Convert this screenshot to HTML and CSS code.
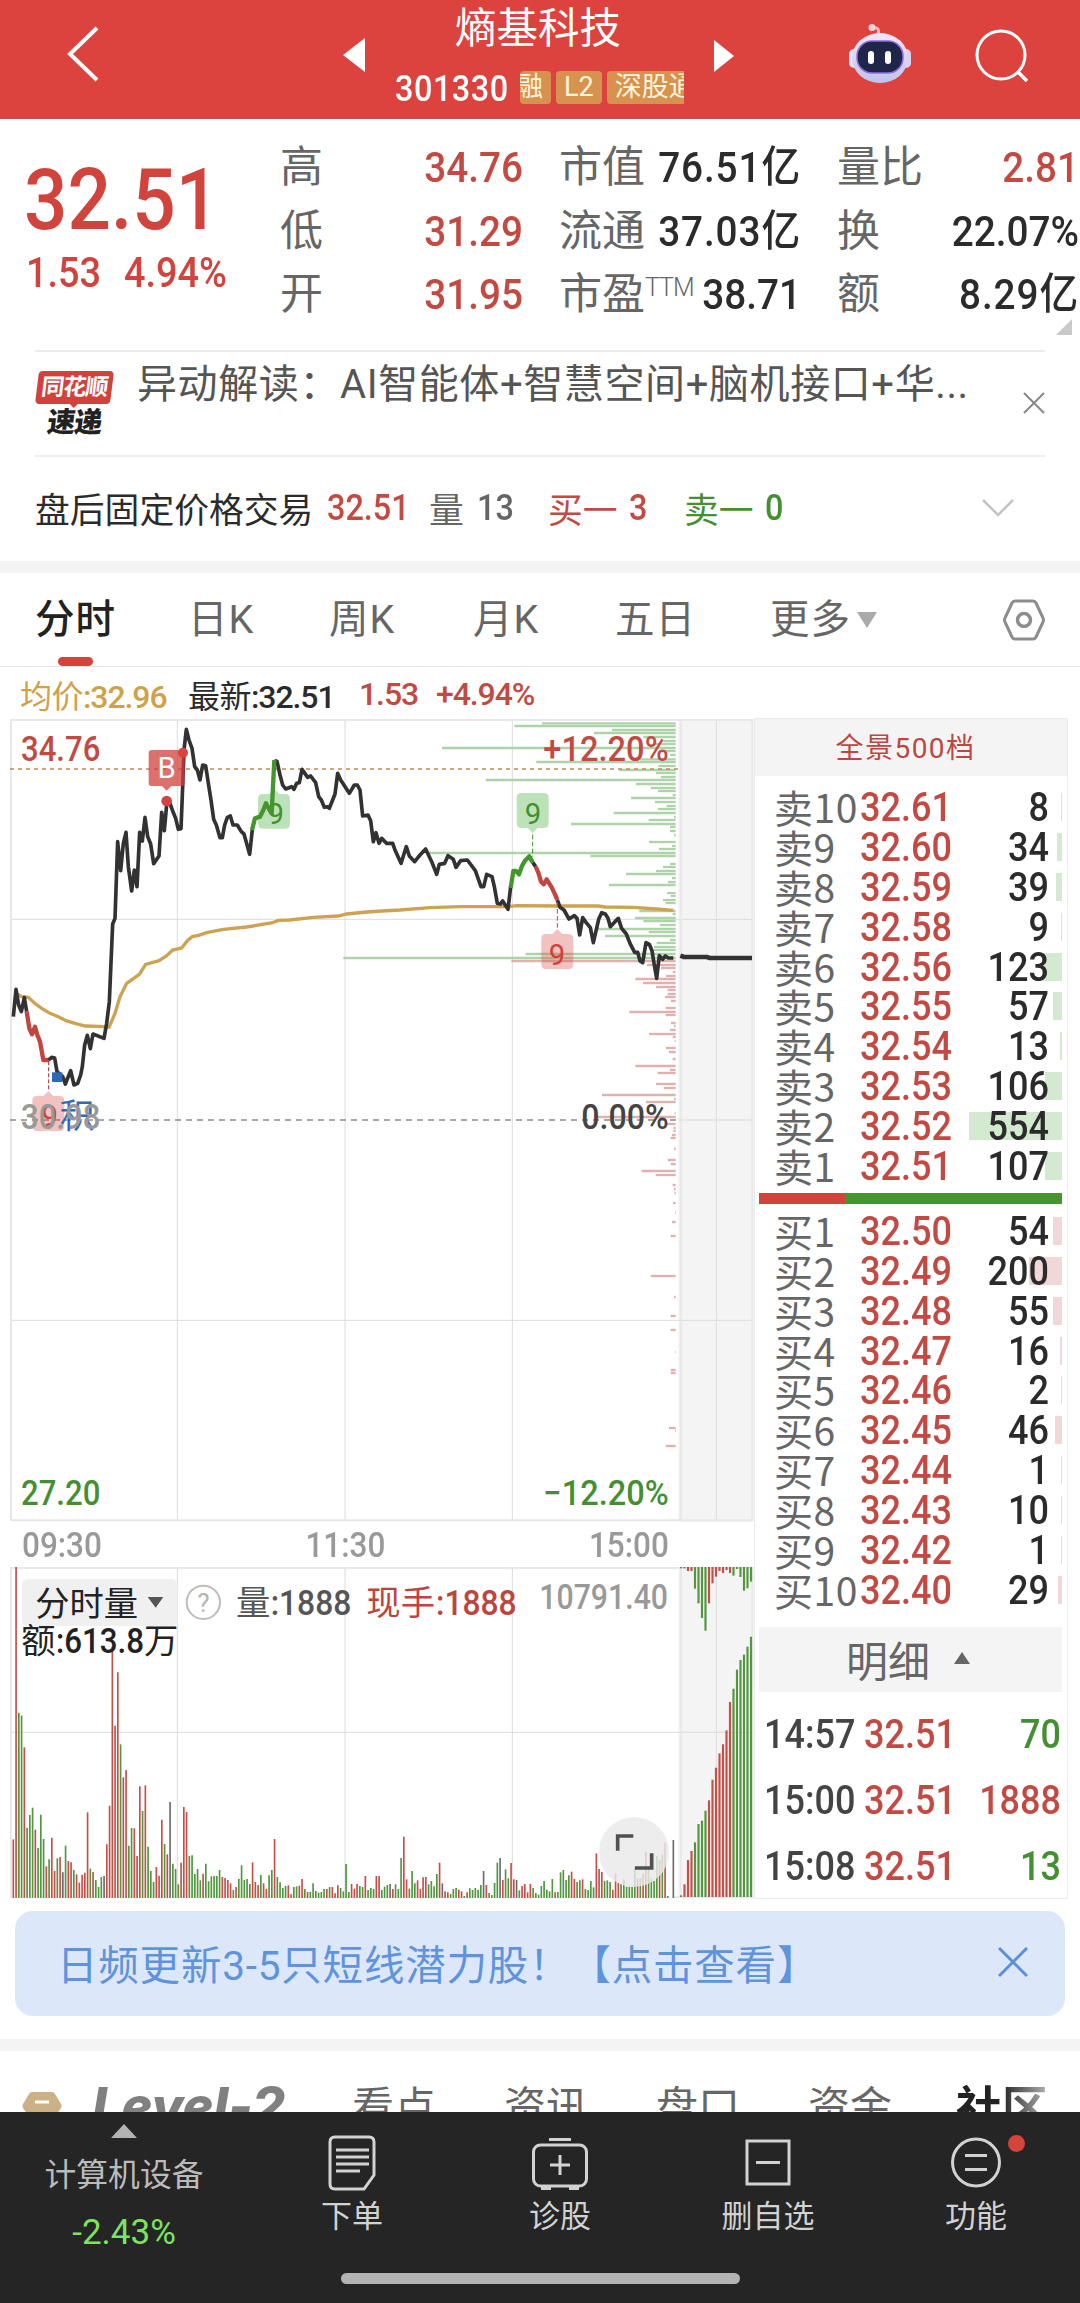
FILE: index.html
```
<!DOCTYPE html>
<html lang="zh-CN">
<head>
  <meta charset="UTF-8">
  <meta name="viewport" content="width=device-width, initial-scale=1.0">
  <title>熵基科技 301330</title>
  <link rel="stylesheet" href="styles.css">
</head>
<body>
  <header class="header">
    <svg class="back" width="34" height="58" viewBox="0 0 34 58"><path d="M31 3 4 29l27 26" fill="none" stroke="#fff" stroke-width="4"/></svg>
    <svg class="prev" width="22" height="34" viewBox="0 0 22 34"><path d="M22 0v34L0 17z" fill="#fff"/></svg>
    <div class="stock">
      <h1>熵基科技</h1>
      <div class="stock-code">
        <span class="code">301330</span>
        <div class="tags"><span class="tag tag-cut">融</span><span class="tag">L2</span><span class="tag">深股通</span></div>
      </div>
    </div>
    <svg class="next" width="20" height="32" viewBox="0 0 20 32"><path d="M0 0v32l20-16z" fill="#fff"/></svg>
    <svg class="robot" width="64" height="60" viewBox="0 0 64 60">
      <defs><linearGradient id="rb" x1="0" y1="0" x2="0" y2="1"><stop offset="0" stop-color="#f6e6f6"/><stop offset="1" stop-color="#bfc3ea"/></linearGradient></defs>
      <path d="M30 10c2-5-1-7-6-6" fill="none" stroke="#f3b8c0" stroke-width="3"/><circle cx="24" cy="3.500" r="3.500" fill="#fbd3d6"/>
      <rect x="1" y="25" width="10" height="19" rx="5" fill="#eee4f6"/><rect x="53" y="25" width="10" height="19" rx="5" fill="#d8d2f2"/>
      <ellipse cx="32" cy="34" rx="28" ry="25" fill="url(#rb)"/>
      <rect x="9" y="17" width="46" height="32" rx="15" fill="#20264a" stroke="#8a70dc" stroke-width="1.500"/>
      <rect x="20" y="27" width="6" height="13" rx="3" fill="#fff"/><rect x="37" y="27" width="6" height="13" rx="3" fill="#fff"/>
    </svg>
    <svg class="search" width="54" height="54" viewBox="0 0 54 54"><circle cx="26" cy="26" r="24" fill="none" stroke="#fff" stroke-width="3"/><path d="m43 43 9 9" stroke="#fff" stroke-width="3.500"/></svg>
  </header>

  <section class="quote">
    <div class="price-box">
      <div class="price">32.51</div>
      <div class="change"><span>1.53</span><span>4.94%</span></div>
    </div>
    <dl class="stats">
      <dt>高</dt><dd class="red">34.76</dd><dt>市值</dt><dd class="yi">76.51亿</dd><dt>量比</dt><dd class="red">2.81</dd>
      <dt>低</dt><dd class="red">31.29</dd><dt>流通</dt><dd class="yi">37.03亿</dd><dt>换</dt><dd>22.07%</dd>
      <dt>开</dt><dd class="red">31.95</dd><dt>市盈<sup>TTM</sup></dt><dd>38.71</dd><dt>额</dt><dd class="yi">8.29亿</dd>
    </dl>
    <i class="corner"></i>
  </section>

  <section class="news">
    <div class="news-logo"><b class="logo-top">同花顺</b><b class="logo-bottom">速递</b></div>
    <p class="news-text">异动解读：AI智能体+智慧空间+脑机接口+华...</p>
    <svg class="news-close" width="22" height="22" viewBox="0 0 22 22"><path d="m1 1 20 20M21 1 1 21" stroke="#888" stroke-width="2"/></svg>
  </section>

  <section class="after">
    <span class="after-title">盘后固定价格交易</span><span class="num red">32.51</span><span class="muted">量</span><span class="num muted">13</span>
    <span class="red">买一</span><span class="num red">3</span><span class="green">卖一</span><span class="num green">0</span>
    <svg width="32" height="20" viewBox="0 0 32 20"><path d="m1 2 15 15L31 2" fill="none" stroke="#c4c4c4" stroke-width="2.500"/></svg>
  </section>

  <div class="band"></div>

  <nav class="periods">
    <span class="active">分时</span><span>日K</span><span>周K</span><span>月K</span><span>五日</span><span>更多<i class="tri-down"></i></span>
    <svg width="44" height="42" viewBox="0 0 44 42"><path d="M13 2h18q2 0 3 2l7 15q1 2 0 4l-7 15q-1 2-3 2H13q-2 0-3-2L3 23q-1-2 0-4l7-15q1-2 3-2z" fill="none" stroke="#8d8d8d" stroke-width="3"/><circle cx="22" cy="21" r="6.500" fill="none" stroke="#8d8d8d" stroke-width="3.500"/></svg>
  </nav>

  <main class="board">
    <div class="charts">
      <div class="legend"><span class="gold"><i>均价</i>:32.96</span><span><i>最新</i>:32.51</span><span class="red">1.53</span><span class="red">+4.94%</span></div>

      <!-- chart units are thirds of a pixel -->
      <svg class="chart" width="754" height="803" viewBox="0 57 2262 2409">
        <rect x="2035" y="57" width="225" height="2409" fill="#f4f4f4"/>
        <g stroke="#dcdcdc" stroke-width="3">
          <path d="M532 58V2464M1035 58V2464M1537 58V2464M2149 58V2464M33 658H2260M33 1861H2260"/>
          <path d="M33 60V2464M2042 60V2464M2257 60V2464M30 60H2260M30 2461H2260" stroke="#e8e8e8" stroke-width="6"/>
        </g>
        <g id="profile"></g>
        <path d="M30 207H2034" stroke="#c08a58" stroke-width="5" stroke-dasharray="12 12"/>
        <path d="M30 1260H2034" stroke="#8a8a8a" stroke-width="5" stroke-dasharray="18 15"/>
        <path d="M2034 1260H2260" stroke="#e2e2e2" stroke-width="5"/>
        <polyline fill="none" stroke="#cda252" stroke-width="10" points="48,880 65,890 85,892 104,910 125,925 150,940 175,950 198,962 225,970 256,978 298,979 327,982 345,940 360,890 380,850 400,836 418,823 437,793 477,782 500,767 518,750 545,744 562,722 577,710 596,706 620,698 670,688 740,681 800,671 815,669 835,661 870,660 940,652 1015,648 1040,642 1100,636 1145,633 1200,630 1290,623 1380,620 1525,620 1550,617 1670,618 1795,618 1815,621 1900,622 1970,627 2020,631"/>
        <g fill="none" stroke="#323232" stroke-width="11" stroke-linejoin="round">
          <polyline points="40,950 48,868 56,915 64,935 73,893 80,935"/>
          <polyline stroke="#c3453f" stroke-width="13" points="80,935 88,985 96,1003 105,980 112,1005 120,1025 130,1080 148,1080"/>
          <polyline points="146,1080 155,1072 164,1074 171,1115 188,1130 196,1152 212,1112 222,1155 233,1150 242,1125 247,1100 254,1035 262,1006 271,1046 279,1002 312,1015 320,970 328,905 338,672 345,655 353,425 362,512 370,430 378,397 385,500 395,573 403,510 411,560 419,397 427,423 435,352 443,410 452,432 461,491 477,468 485,337 493,392 501,303 510,310 518,333 527,355 535,388 543,386 548,260 552,150 559,88 567,120 576,145 584,200 592,210 600,240 608,195 617,197 625,250 633,300 641,358 649,375 660,413 667,413 674,375 682,352 691,348 699,375 712,375 724,395 732,402 749,463 757,388"/>
          <polyline points="823,182 831,184 840,225 848,255 857,267 875,260 882,268 890,250 898,248 906,208 923,232 932,228 947,248 956,290 964,300 973,322 981,320 988,325 1005,282 1013,220 1022,240 1048,280 1063,255 1072,255 1080,270 1088,348 1104,345 1112,362 1120,425 1128,398 1137,430 1145,415 1160,430 1178,430 1185,450 1203,490 1219,440 1228,468 1244,485 1260,465 1277,447 1295,485 1310,523 1318,493 1334,490 1344,467 1360,478 1368,502 1382,482 1402,480 1426,512 1443,560 1451,560 1460,523 1476,530 1483,560 1492,610 1501,612 1508,603 1524,628 1532,560"/>
          <polyline points="1598,487 1607,500"/>
          <polyline points="1672,600 1680,622 1692,630 1707,657 1723,647 1731,655 1739,705 1748,653 1758,667 1771,683 1780,728 1796,658 1805,638 1816,642 1824,655 1831,680 1845,665 1855,655 1865,685 1879,702 1890,730 1904,757 1913,757 1920,783 1928,788 1938,728 1948,733 1956,752 1962,790 1970,835 1978,767 1988,778 1996,768 2005,774 2020,774"/>
          <polyline stroke-width="14" points="2041,767 2052,771 2120,771 2130,774 2256,774"/>
        </g>
        <!-- markers -->
        <g class="mark">
          <path d="M456 150h88q10 0 10 10v88q0 10-10 10h-30l-14 14-14-14h-30q-10 0-10-10v-88q0-10 10-10z" fill="#d0403c" opacity=".75"/>
          <text x="500" y="233" fill="#fff">B</text>
          <circle cx="549" cy="158" r="15" fill="#d8453f"/><circle cx="500" cy="303" r="16" fill="#cf4541"/>
          <path d="M788 282h20l15-15 15 15h18q14 0 14 14v76q0 14-14 14h-68q-14 0-14-14v-76q0-14 14-14z" fill="#4caf43" opacity=".37"/>
          <text x="827" y="373" fill="#3f922d">9</text>
          <path d="M1564 279h68q14 0 14 14v77q0 14-14 14h-19l-15 15-15-15h-19q-14 0-14-14v-77q0-14 14-14z" fill="#4caf43" opacity=".37"/>
          <text x="1599" y="372" fill="#3f922d">9</text>
          <path d="M1598 404v66" stroke="#3f922d" stroke-width="3" stroke-dasharray="14 7"/>
          <path d="M1638 702h19l15-15 15 15h19q14 0 14 14v77q0 14-14 14h-68q-14 0-14-14v-77q0-14 14-14z" fill="#d8453f" opacity=".33"/>
          <text x="1671" y="795" fill="#d13e3a">9</text>
          <path d="M1672 606v78" stroke="#c3453f" stroke-width="3" stroke-dasharray="14 7"/>
          <path d="M111 1188h19l15-15 15 15h19q14 0 14 14v77q0 14-14 14h-68q-14 0-14-14v-77q0-14 14-14z" fill="#d8453f" opacity=".33"/>
          <text x="149" y="1277" fill="#d13e3a">9</text>
          <path d="M146 1084v88" stroke="#9c3030" stroke-width="3" stroke-dasharray="12 6"/>
          <rect x="156" y="1117" width="31" height="29" fill="#2e68b8"/>
          <text class="ji" x="231" y="1284" fill="#2f69b7">积</text>
        </g>
        <g fill="none" stroke="#43952c" stroke-width="13" stroke-linejoin="round">
          <polyline points="756,390 765,355 780,350 790,330 798,310 806,325 815,340 823,180"/>
          <polyline points="1532,564 1540,513 1548,513 1557,523 1566,498 1575,482 1588,469 1598,487"/>
          <polyline stroke="#c3453f" points="1607,500 1615,518 1623,545 1631,553 1640,538 1655,562 1665,583 1672,600"/>
        </g>
        <g class="axis">
          <text x="63" y="183" textLength="238" lengthAdjust="spacingAndGlyphs" fill="#c24a43">34.76</text>
          <text x="1630" y="183" textLength="376" lengthAdjust="spacingAndGlyphs" fill="#c24a43">+12.20%</text>
          <text x="63" y="1286" textLength="238" lengthAdjust="spacingAndGlyphs" fill="#999">30.98</text>
          <text x="1744" y="1286" textLength="262" lengthAdjust="spacingAndGlyphs" fill="#444">0.00%</text>
          <text x="63" y="2415" textLength="238" lengthAdjust="spacingAndGlyphs" fill="#448f32">27.20</text>
          <text x="1630" y="2415" textLength="376" lengthAdjust="spacingAndGlyphs" fill="#448f32">−12.20%</text>
        </g>
      </svg>

      <div class="times"><span>09:30</span><span>11:30</span><span>15:00</span></div>

      <svg class="chart" width="754" height="332" viewBox="0 321 2262 996">
        <rect x="2035" y="321" width="225" height="993" fill="#f4f4f4"/>
        <g stroke="#dcdcdc" stroke-width="3">
          <path d="M532 321V1314M1035 321V1314M1537 321V1314M2149 321V1314M33 817H2260"/>
          <path d="M33 324V1314M2042 324V1314M2257 324V1314M30 324H2260M2020 1312H2260" stroke="#e8e8e8" stroke-width="6"/>
        </g>
        <g id="volume"></g>
        <g class="vol-text">
          <rect x="66" y="357" width="466" height="141" rx="16" fill="#f0f0f0"/>
          <text class="zh" x="106" y="467" textLength="308" fill="#222">分时量</text>
          <path d="M443 411h47l-23 32z" fill="#555"/>
          <circle cx="610" cy="427" r="50" fill="none" stroke="#bdbdbd" stroke-width="6"/>
          <text class="help" x="610" y="455" fill="#b5b5b5">?</text>
          <text class="zh" x="708" y="465" fill="#555">量</text><text x="812" y="465" textLength="242" lengthAdjust="spacingAndGlyphs" fill="#555">:1888</text>
          <text class="zh" x="1099" y="465" textLength="206" fill="#bd4540">现手</text><text x="1308" y="465" textLength="242" lengthAdjust="spacingAndGlyphs" fill="#bd4540">:1888</text>
          <text x="1618" y="447" textLength="386" lengthAdjust="spacingAndGlyphs" fill="#999">10791.40</text>
          <text class="zh" x="64" y="578" fill="#222">额</text><text x="168" y="578" textLength="264" lengthAdjust="spacingAndGlyphs" fill="#222">:613.8</text><text class="zh" x="432" y="578" fill="#222">万</text>
        </g>
        <circle cx="1902" cy="1176" r="105" fill="#e9e9e9" opacity=".82"/>
        <path d="M1853 1172v-44h47M1955 1180v44h-50" fill="none" stroke="#505050" stroke-width="11"/>
      </svg>
    </div>

    <aside class="book">
      <div class="book-head">全景500档</div>
      <div class="orders" id="asks"></div>
      <div class="ratio"><i></i></div>
      <div class="orders bids" id="bids"></div>
      <div class="detail-head">明细<i class="tri-up"></i></div>
      <div class="trade"><span>14:57</span><span class="red">32.51</span><span class="green">70</span></div>
      <div class="trade"><span>15:00</span><span class="red">32.51</span><span class="red">1888</span></div>
      <div class="trade"><span>15:08</span><span class="red">32.51</span><span class="green">13</span></div>
    </aside>
  </main>

  <div class="banner">
    <span>日频更新3-5只短线潜力股！【点击查看】</span>
    <svg width="30" height="30" viewBox="0 0 30 30"><path d="m1 1 28 28M29 1 1 29" stroke="#5a8fdc" stroke-width="3"/></svg>
  </div>

  <div class="band"></div>

  <nav class="sections">
    <svg width="40" height="30" viewBox="0 0 40 30"><path d="M10 0h20q2 0 3 2l6 10q1 2 0 4l-8 12H9L1 16q-1-2 0-4L7 2q1-2 3-2z" fill="#ccb086"/><path d="M13 10h14" stroke="#fff" stroke-width="3"/></svg>
    <b class="level">Level-2</b><span>看点</span><span>资讯</span><span>盘口</span><span>资金</span><span class="current">社区</span>
  </nav>

  <footer class="toolbar">
    <div class="tools">
      <div class="sector"><i class="tri-up"></i><span>计算机设备</span><em>-2.43%</em></div>
      <div class="tool">
        <svg width="56" height="56" viewBox="0 0 56 56"><g fill="none" stroke="#d2d2d2" stroke-width="3"><path d="M11 2h34q5 0 5 5v33L40 54H11q-5 0-5-5V7q0-5 5-5z"/><path d="M12 15h33M12 22h33M12 29h33M12 36h24"/></g></svg>
        <span>下单</span>
      </div>
      <div class="tool">
        <svg width="56" height="56" viewBox="0 0 56 56"><g fill="none" stroke="#d2d2d2" stroke-width="3"><rect x="1.500" y="10" width="53" height="41" rx="7"/><path d="M17 4.500h22M28 20v20M18 30h20"/><path d="M9 53h10M37 53h10" stroke-width="4"/></g></svg>
        <span>诊股</span>
      </div>
      <div class="tool">
        <svg width="56" height="56" viewBox="0 0 56 56"><g fill="none" stroke="#d2d2d2" stroke-width="3"><rect x="7" y="6" width="42" height="43"/><path d="M16 27.500h24"/></g></svg>
        <span>删自选</span>
      </div>
      <div class="tool">
        <svg width="56" height="56" viewBox="0 0 56 56"><g fill="none" stroke="#d2d2d2" stroke-width="3"><circle cx="28" cy="27.500" r="23.500"/><path d="M17 20.500h22M17 34.500h22"/></g></svg>
        <span>功能</span><i class="dot"></i>
      </div>
    </div>
    <div class="home-bar"></div>
  </footer>

  <script>
    const RED = '#c5504a', GREEN = '#52963f', GRAY = '#6c6c6c';
    const colors = { r: RED, g: GREEN, d: GRAY };

    // order book
    const asks = [['卖10', '32.61', 8], ['卖9', '32.60', 34], ['卖8', '32.59', 39], ['卖7', '32.58', 9], ['卖6', '32.56', 123],
      ['卖5', '32.55', 57], ['卖4', '32.54', 13], ['卖3', '32.53', 106], ['卖2', '32.52', 554], ['卖1', '32.51', 107]];
    const bids = [['买1', '32.50', 54], ['买2', '32.49', 200], ['买3', '32.48', 55], ['买4', '32.47', 16], ['买5', '32.46', 2],
      ['买6', '32.45', 46], ['买7', '32.44', 1], ['买8', '32.43', 10], ['买9', '32.42', 1], ['买10', '32.40', 29]];
    function renderOrders(id, list) {
      document.getElementById(id).innerHTML = list.map(([name, price, qty]) =>
        `<div class="order"><span class="name">${name}</span><span class="order-price">${price}</span><span class="qty">${qty}</span><i style="width:${Math.floor(qty / 554 * 93)}px"></i></div>`).join('');
    }
    renderOrders('asks', asks);
    renderOrders('bids', bids);

    // price distribution: left edge, y
    const up = [[516,70],[433,78],[726,90],[672,99],[820,111],[880,123],[850,132],[216,144],[880,153],[900,165],[800,178],[499,186],[865,198],[748,210],[858,219],[873,231],[347,240],[798,252],[842,264],[864,273],[908,285],[783,294],[855,306],[890,318],[864,327],[731,339],[912,351],[836,360],[603,372],[900,381],[900,393],[912,405],[837,426],[906,438],[867,447],[170,459],[661,468],[900,492],[879,501],[858,513],[768,522],[906,534],[894,546],[717,555],[891,579],[902,588],[879,600],[887,609],[808,633],[908,642],[795,654],[820,663],[870,675],[680,687],[836,696],[705,708],[900,720],[860,729],[852,741],[852,750],[467,762],[-80,774]];
    const down = [[424,783],[831,795],[873,804],[908,816],[888,828],[796,837],[819,849],[858,861],[893,870],[893,882],[885,891],[903,903],[887,924],[778,936],[887,945],[903,969],[912,978],[900,990],[837,1002],[908,1011],[914,1023],[888,1044],[897,1056],[908,1077],[796,1098],[900,1110],[863,1119],[858,1152],[881,1164],[696,1185],[912,1197],[828,1206],[914,1239],[680,1251],[889,1272],[910,1284],[910,1293],[906,1305],[902,1314],[912,1347],[893,1380],[902,1392],[815,1413],[857,1425],[908,1455],[912,1467],[913,1479],[909,1509],[915,1539],[906,1566],[902,1608],[842,1728],[912,1791],[902,1848],[902,1890],[915,1956],[902,2010],[902,2019],[897,2184],[915,2193],[887,2238]];
    const hbar = color => ([x, y]) => `<path d="M${x + 1110} ${y}H2027" stroke="${color}" stroke-width="7"/>`;
    document.getElementById('profile').innerHTML = up.map(hbar('#aed2a9')).join('') + down.map(hbar('#dfb2b0')).join('');

    // volume per minute: colour + top of the bar
    const volume = `r1138 r321 g758 g767 r862 g1103 g1065 g1043 r1109 g1164 g1064 g1137 r1219 g1198 r1133 r1233 g1195 r1191 d1237 g1157
      r1203 r1207 g1230 r1243 r1268 r1244 r1238 r1057 g1226 r1236 g1260 g1281 g1251 d1248 r1153 r1037 r560 r797 r637 g853
      r952 r930 g1157 g1104 r1105 r1188 r979 g1053 r976 g1160 g1233 g1266 r1221 r1247 r1079 g1152 r1183 d1026 g1211 g1227
      g1273 r1208 r1041 r1056 g1188 g1186 g1242 g1227 g1261 r1241 g1211 g1264 g1249 g1248 g1248 g1230 r1251 r1254 r1260 r1270
      g1290 r1281 g1257 g1216 g1260 g1257 g1272 r1207 r1266 r1275 g1245 r1270 r1287 g1246 g1230 r1137 g1251 g1267 g1284 g1278
      r1276 r1303 g1281 g1279 r1277 r1257 g1287 r1296 g1296 g1270 g1293 g1298 g1296 g1287 r1287 g1281 r1281 r1300 r1276 g1284
      g1294 g1212 g1296 r1272 r1286 r1272 g1278 g1281 r1248 g1290 g1284 g1287 r1248 r1248 g1290 g1280 g1275 d1272 r1287 g1273
      g1287 g1194 r1130 r1258 g1286 g1233 g1270 r1261 r1287 r1252 r1251 g1273 g1263 g1279 g1242 r1208 d1270 r1294 r1297 g1302
      g1287 g1284 r1289 r1294 g1308 r1297 g1285 g1290 g1284 g1289 g1275 d1233 r1275 g1299 g1305 g1269 g1208 d1194 r1260 g1228
      g1255 r1209 r1258 d1260 g1291 r1278 r1272 r1297 r1272 g1284 g1299 g1304 g1278 g1263 g1289 g1294 g1257 r1297 g1296 g1237
      g1230 g1260 g1246 r1235 r1257 g1266 g1261 r1258 g1287 g1290 g1263 g1282 r1180 r1227 r1236 g1263 g1261 g1266 r1289 r1240
      r1268 g1272 g1258 g1280 g1280 g1280 g1220 r1255 g1255 r1240 r1175 g1220 g1255 g1262 g1188 r1200 g1183 r1148 g1308 g1314 d1140`.split(/\s+/);
    const auctionTop = 'g325 r325 r333 r333 g386 g430 g474 g512 r430 r370 r350 r333 r339 r330 r339 g347 g327 g351 g392 g385 g365'.split(' ');
    const auctionBottom = 'g1306 r1273 r1200 r1173 g1147 g1092 g1082 g1052 r1021 r959 r923 r880 r853 r811 r726 g686 g629 g600 g584 g560 g530'.split(' ');
    const vbar = (x, from, item, w) => `<path d="M${x} ${from}V${item.slice(1)}" stroke="${colors[item[0]]}" stroke-width="${w}"/>`;
    document.getElementById('volume').innerHTML =
      volume.map((v, i) => vbar(40 + i * 8.25, 1314, v, 5)).join('') +
      auctionTop.map((v, i) => vbar(2043 + i * 10.5, 321, v, 6.5)).join('') +
      auctionBottom.map((v, i) => vbar(2043 + i * 10.5, 1311, v, 6.5)).join('');
  </script>
</body>
</html>
```

FILE: styles.css
```
* {
  box-sizing: border-box;
}
body {
  margin: 0;
  width: 1080px;
  height: 2303px;
  overflow: hidden;
  display: flex;
  flex-direction: column;
  background: #fff;
  color: #2b2b2b;
  font-family: Roboto, "Noto Sans CJK SC", sans-serif;
}
svg {
  display: block;
  flex: none;
}
i, em {
  font-style: normal;
}
.red { color: #c24a43; }
.green { color: #448f32; }
.gold { color: #d0a14b; }
.muted { color: #666; }

/* narrow figures */
.code, .price, .change span, .num, .times span, .order-price, .trade span {
  transform: scaleX(.9);
  transform-origin: 0 50%;
}
.qty, .stats dd, .trade span:nth-child(3), .times span:nth-child(3) {
  transform: scaleX(.9);
  transform-origin: 100% 50%;
}

.header {
  height: 119px;
  flex: none;
  display: flex;
  align-items: flex-start;
  background: #dc433e;
  border-bottom: 1px solid #b8514c;
  color: #fff;
}
.back { margin: 25px 0 0 66px; }
.prev { margin: 38px 0 0 243px; }
.stock {
  width: 349px;
  padding-left: 30px;
}
.stock h1 {
  margin: 0;
  padding: 1px 0 0 60px;
  font-size: 41.5px;
  line-height: 56px;
  font-weight: 400;
}
.stock-code {
  display: flex;
  padding-top: 14px;
}
.code {
  width: 125px;
  font-size: 36px;
  line-height: 36px;
  font-weight: 500;
  letter-spacing: .6px;
}
.tags {
  width: 164px;
  display: flex;
  gap: 5px;
  overflow: hidden;
}
.tag {
  flex: none;
  height: 33px;
  padding: 0 8px;
  border-radius: 4px;
  background: #d8924f;
  color: #fff6dd;
  font-size: 27px;
  line-height: 33px;
}
.tag-cut {
  padding: 0 9px 0 0;
  width: 31px;
  text-indent: -4px;
}
.next { margin-top: 40px; }
.robot { margin: 24px 0 0 114px; }
.search { margin: 29px 0 0 63px; }

.quote {
  position: relative;
  height: 231px;
  flex: none;
  display: flex;
  padding-top: 17px;
}
.price-box {
  width: 280px;
  padding-left: 24px;
  color: #d0443d;
  font-weight: 500;
}
.price {
  margin-top: 22px;
  font-size: 85px;
  line-height: 84px;
}
.change {
  display: flex;
  padding-left: 2px;
  font-size: 42px;
  line-height: 62px;
}
.change span:first-child {
  width: 98px;
}
.stats {
  width: 799px;
  height: 190px;
  margin: 0;
  display: grid;
  grid-template-columns: 90px 153px 130px 148px 130px 148px;
  grid-auto-rows: 63.500px;
  line-height: 63px;
  font-size: 43px;
}
.stats dt {
  color: #666;
  white-space: nowrap;
}
.stats dt:nth-of-type(3n+2), .stats dt:nth-of-type(3n) {
  padding-left: 36px;
}
.stats dd {
  margin: 0;
  display: flex;
  justify-content: flex-end;
  white-space: nowrap;
  font-weight: 500;
  font-size: 43px;
}
.stats .yi {
  letter-spacing: 1px;
}
.stats sup {
  font-size: 25px;
  font-weight: 300;
  line-height: 0;
  vertical-align: 13px;
  letter-spacing: -1px;
}
.corner {
  position: absolute;
  left: 1056px;
  top: 200px;
  border: 8px solid;
  border-color: transparent #c9c9c9 #c9c9c9 transparent;
}

.news {
  height: 105px;
  flex: none;
  margin: 0 35px;
  display: flex;
  border-top: 2px solid #ececec;
}
.news-logo {
  width: 102px;
  padding: 19px 0 0 2px;
  text-align: center;
}
.logo-top, .logo-bottom {
  display: block;
  width: 75px;
  font-size: 23px;
  line-height: 33px;
  transform: skewX(-7deg);
  letter-spacing: -1px;
}
.logo-top {
  position: relative;
  background: #d0433d;
  color: #fff;
  border-radius: 4px;
}
.logo-top::after {
  content: "";
  position: absolute;
  left: 34px;
  top: 32px;
  border: 5px solid transparent;
  border-top-color: #d0433d;
}
.logo-bottom {
  font-weight: 900;
  font-size: 28px;
  line-height: 33px;
  padding-top: 2px;
  color: #222;
}
.news-text {
  margin: 0;
  width: 886px;
  font-size: 40px;
  line-height: 65px;
  letter-spacing: .6px;
  white-space: nowrap;
  color: #555;
}
.news-close { margin-top: 40px; }

.after {
  height: 106px;
  flex: none;
  margin: 0 35px;
  display: grid;
  grid-template-columns: 292px 102px 48px 71px 81px 55px 81px 217px 32px;
  align-items: center;
  padding-bottom: 2px;
  border-top: 2px solid #ececec;
  font-size: 34.800px;
  white-space: nowrap;
}
.num {
  font-size: 36px;
  font-weight: 500;
}
.band {
  height: 12px;
  flex: none;
  background: #f4f4f4;
}

.periods {
  height: 94px;
  flex: none;
  display: grid;
  grid-template-columns: 153px 141px 144px 142px 155px 232px 44px;
  align-items: center;
  padding-left: 35px;
  border-bottom: 1px solid #e3e3e3;
  color: #666;
  font-size: 39.500px;
  letter-spacing: 1px;
  line-height: 92px;
}
.periods span {
  position: relative;
  white-space: nowrap;
}
.periods .active {
  color: #222;
  font-weight: 500;
}
.active::after {
  content: "";
  position: absolute;
  left: 23px;
  bottom: 0;
  width: 35px;
  height: 9px;
  border-radius: 5px;
  background: #d4433c;
}
.tri-down {
  display: inline-block;
  margin-left: 6px;
  vertical-align: 5px;
  border: 10px solid transparent;
  border-top: 16px solid #aaa;
  border-bottom: 0;
}

.board {
  height: 1238px;
  flex: none;
  display: flex;
}
.charts {
  width: 754px;
}
.legend {
  height: 52px;
  padding-left: 20px;
  display: grid;
  grid-template-columns: 168px 171px 77px 130px;
  align-items: center;
  padding-top: 2px;
  font-size: 32px;
  letter-spacing: -1.100px;
  white-space: nowrap;
  font-weight: 500;
}
.legend i {
  font-weight: 400;
  letter-spacing: -.5px;
}
.chart text {
  font-weight: 500;
}
.axis text {
  font-size: 105px;
}
.mark text {
  text-anchor: middle;
  font-size: 88px;
  font-weight: 400;
}
.mark .ji {
  font-size: 104px;
}
.vol-text text {
  font-size: 105px;
}
.vol-text .zh {
  font-size: 103px;
  font-weight: 400;
}
.vol-text .help {
  font-size: 78px;
  font-weight: 400;
  text-anchor: middle;
}
.times {
  height: 45px;
  padding: 2px 85px 0 22px;
  display: flex;
  justify-content: space-between;
  align-items: center;
  color: #999;
  font-size: 35px;
  font-weight: 500;
}
.times span:nth-child(2) {
  transform-origin: 50% 50%;
}

.book {
  width: 314px;
  height: 1181px;
  margin-top: 51px;
  border: 1px solid #ebebeb;
}
.book-head {
  height: 57px;
  background: #f4f4f4;
  text-align: center;
  padding-right: 11px;
  line-height: 59px;
  font-size: 28px;
  letter-spacing: 1.500px;
  color: #bd4640;
}
.orders {
  padding-top: 11px;
}
.order {
  position: relative;
  height: 39.900px;
  padding: 0 18px 0 19px;
  display: flex;
  line-height: 42px;
}
.name {
  width: 86px;
  color: #666;
  font: 39px/38px "Noto Sans CJK SC", sans-serif;
  letter-spacing: .5px;
  white-space: nowrap;
}
.order-price {
  width: 90px;
  color: #c24a43;
  font-size: 40px;
  font-weight: 500;
}
.qty {
  flex: 1;
  text-align: right;
  color: #2b2b2b;
  font-size: 40px;
  font-weight: 500;
}
.order i {
  position: absolute;
  z-index: -1;
  right: 5px;
  top: 6px;
  min-width: 1px;
  height: 28px;
  background: #d3ead0;
}
.bids i {
  background: #f2d7d8;
}
.ratio {
  height: 11px;
  margin: 7px 5px 0 4px;
  background: #43952c;
}
.ratio i {
  display: block;
  width: 86px;
  height: 11px;
  background: #d0443d;
}
.bids {
  padding-top: 7px;
}
.detail-head {
  height: 65px;
  margin: 17px 5px 9px 4px;
  padding: 0 0 2px 87px;
  display: flex;
  align-items: center;
  background: #f4f4f4;
  color: #666;
  font-size: 42px;
}
.tri-up {
  border: 8px solid transparent;
  border-bottom: 12px solid #666;
  border-top: 0;
}
.detail-head .tri-up {
  margin-left: 24px;
}
.trade {
  height: 66px;
  padding: 2px 6px 0 9px;
  display: flex;
  align-items: center;
  font-size: 40px;
  font-weight: 500;
  color: #444;
}
.trade span:nth-child(1) { width: 100px; }
.trade span:nth-child(2) { width: 95px; }
.trade span:nth-child(3) {
  flex: 1;
  text-align: right;
}
.trade .red { color: #c24a43; }
.trade .green { color: #448f32; }

.banner {
  height: 105px;
  flex: none;
  margin: 6px 15px 23px;
  padding: 0 37px 3px 42px;
  display: flex;
  justify-content: space-between;
  align-items: center;
  border-radius: 18px;
  background: #dce8fa;
  color: #5f93dc;
  font-size: 40.500px;
  letter-spacing: .8px;
  white-space: nowrap;
}
.sections {
  height: 61px;
  flex: none;
  padding-left: 22px;
  display: grid;
  grid-template-columns: 70px 260px 152px 152px 152px 148px 100px;
  align-items: start;
  overflow: hidden;
  color: #666;
  font-size: 42px;
  line-height: 114px;
  white-space: nowrap;
}
.sections svg { margin-top: 41px; }
.level {
  color: #808080;
  font-family: Inter, sans-serif;
  font-size: 52px;
  line-height: 112px;
  font-style: italic;
  font-weight: 800;
}
.current {
  font-size: 46px;
  font-weight: 700;
  background: linear-gradient(90deg, #222 45%, #ccc 100%);
  -webkit-background-clip: text;
  color: transparent;
}

.toolbar {
  height: 191px;
  flex: none;
  background: #252525;
  color: #d2d2d2;
}
.tools {
  height: 161px;
  display: flex;
  font-size: 31px;
}
.sector {
  width: 248px;
  padding-top: 12px;
  display: flex;
  flex-direction: column;
  align-items: center;
  color: #bbb;
  line-height: 60px;
}
.sector .tri-up {
  border-width: 0 13px 14px;
  border-bottom-color: #b3b3b3;
  margin-bottom: 7px;
}
.sector span { font-size: 31.800px; }
.sector em {
  color: #7ee35f;
  font-size: 35px;
  line-height: 56px;
}
.tool {
  position: relative;
  width: 208px;
  padding-top: 23px;
  display: flex;
  flex-direction: column;
  align-items: center;
  line-height: 51px;
}
.dot {
  position: absolute;
  left: 136px;
  top: 23px;
  width: 17px;
  height: 17px;
  border-radius: 50%;
  background: #d4433c;
}
.home-bar {
  width: 399px;
  height: 11px;
  margin: 0 auto;
  border-radius: 6px;
  background: #b3b3b3;
}
```
